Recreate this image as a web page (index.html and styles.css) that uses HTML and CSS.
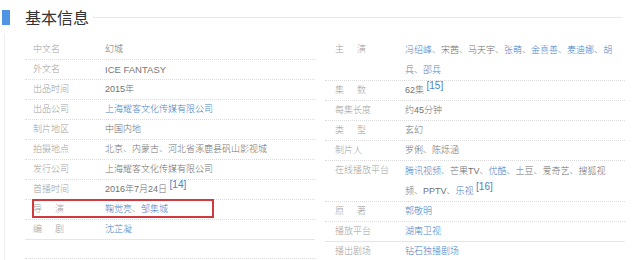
FILE: index.html
```html
<!DOCTYPE html>
<html lang="zh-CN">
<head>
<meta charset="utf-8">
<title>基本信息</title>
<link rel="stylesheet" href="styles.css">
</head>
<body>
<div class="page">
  <div class="head">
    <span class="bar"></span>
    <h2 class="title">基本信息</h2>
    <span class="rule"></span>
  </div>
  <div class="frame">
    <dl class="col left">
      <div class="row"><dt>中文名</dt><dd>幻城</dd></div>
      <div class="row"><dt>外文名</dt><dd class="latin">ICE FANTASY</dd></div>
      <div class="row"><dt>出品时间</dt><dd>2015年</dd></div>
      <div class="row"><dt>出品公司</dt><dd><a>上海耀客文化传媒有限公司</a></dd></div>
      <div class="row"><dt>制片地区</dt><dd>中国内地</dd></div>
      <div class="row"><dt>拍摄地点</dt><dd>北京、内蒙古、河北省涿鹿县矾山影视城</dd></div>
      <div class="row"><dt>发行公司</dt><dd>上海耀客文化传媒有限公司</dd></div>
      <div class="row"><dt>首播时间</dt><dd>2016年7月24日 <sup class="ref">[14]</sup></dd></div>
      <div class="row"><dt class="wide">导演</dt><dd><a>鞠觉亮</a>、<a>邹集城</a></dd><span class="box"></span></div>
      <div class="row solid"><dt class="wide">编剧</dt><dd><a>沈芷凝</a></dd></div>
      <div class="row empty"><dt></dt><dd></dd></div>
    </dl>
    <dl class="col right">
      <div class="row"><dt class="wide">主演</dt><dd><span class="line"><a>冯绍峰</a>、宋茜、马天宇、<a>张萌</a>、<a>金喜善</a>、<a>麦迪娜</a>、<a>胡</a></span><span class="line"><a>兵</a>、<a>邵兵</a></span></dd></div>
      <div class="row"><dt class="wide">集数</dt><dd>62集 <sup class="ref">[15]</sup></dd></div>
      <div class="row"><dt>每集长度</dt><dd>约45分钟</dd></div>
      <div class="row"><dt class="wide">类型</dt><dd>玄幻</dd></div>
      <div class="row"><dt>制片人</dt><dd>罗俐、陈烁涵</dd></div>
      <div class="row"><dt>在线播放平台</dt><dd><span class="line"><a>腾讯视频</a>、芒果TV、<a>优酷</a>、土豆、爱奇艺、搜狐视</span><span class="line">频、PPTV、<a>乐视</a> <sup class="ref">[16]</sup></span></dd></div>
      <div class="row"><dt class="wide">原著</dt><dd><a>郭敬明</a></dd></div>
      <div class="row solid"><dt>播放平台</dt><dd><a>湖南卫视</a></dd></div>
      <div class="row"><dt>播出剧场</dt><dd><a>钻石独播剧场</a></dd></div>
    </dl>
  </div>
</div>
</body>
</html>
```

FILE: styles.css
```css
html, body {
  margin: 0;
  padding: 0;
  background: #fff;
}
body {
  font-family: "Liberation Sans", "Noto Sans CJK SC", sans-serif;
  font-size: 9px;
  font-weight: 300;
  color: #666;
}
.page {
  width: 640px;
  height: 260px;
  overflow: hidden;
}
.head {
  display: flex;
  align-items: center;
  height: 34px;
}
.bar {
  width: 8px;
  height: 15px;
  margin-left: 2px;
  background: #4f95e3;
}
.title {
  margin: 0 0 0 15px;
  font-family: "Noto Sans CJK SC", sans-serif;
  font-size: 16px;
  font-weight: normal;
  line-height: 20px;
  color: #333;
}
.rule {
  flex: 1;
  height: 1px;
  margin: 0 18px 0 4px;
  background: #e8e8e8;
}
.frame {
  display: flex;
  gap: 10px;
  margin-left: 4px;
  padding: 6px 0 0 20px;
  border-left: 1px solid #efefef;
  height: 230px;
}
.col {
  margin: 0;
  padding: 0;
}
.left {
  width: 290px;
}
.right {
  width: 300px;
}
.row {
  position: relative;
  display: flex;
  border-bottom: 1px dotted #dcdcdc;
}
.row.solid {
  border-bottom: 1px solid #e6e6e6;
}
.row.empty {
  height: 18px;
}
dt, dd {
  margin: 0;
  line-height: 19px;
}
dt {
  flex: none;
  width: 80px;
  box-sizing: border-box;
  padding-left: 8px;
  color: #a0a0a0;
}
.right dt {
  padding-left: 10px;
}
dt.wide {
  letter-spacing: 13px;
}
dd {
  color: #707070;
}
.latin {
  font-size: 9.5px;
  color: #777;
}
.line {
  display: block;
  line-height: 20px;
}
.right dd {
  width: 212px;
}
a {
  color: #4a82c6;
}
.ref {
  font-size: 10px;
  line-height: 0;
  vertical-align: 4px;
  color: #4a82c6;
}
.box {
  position: absolute;
  left: 7px;
  top: -1px;
  width: 182px;
  height: 19px;
  border: 2px solid #d23a40;
  box-sizing: border-box;
}
```
